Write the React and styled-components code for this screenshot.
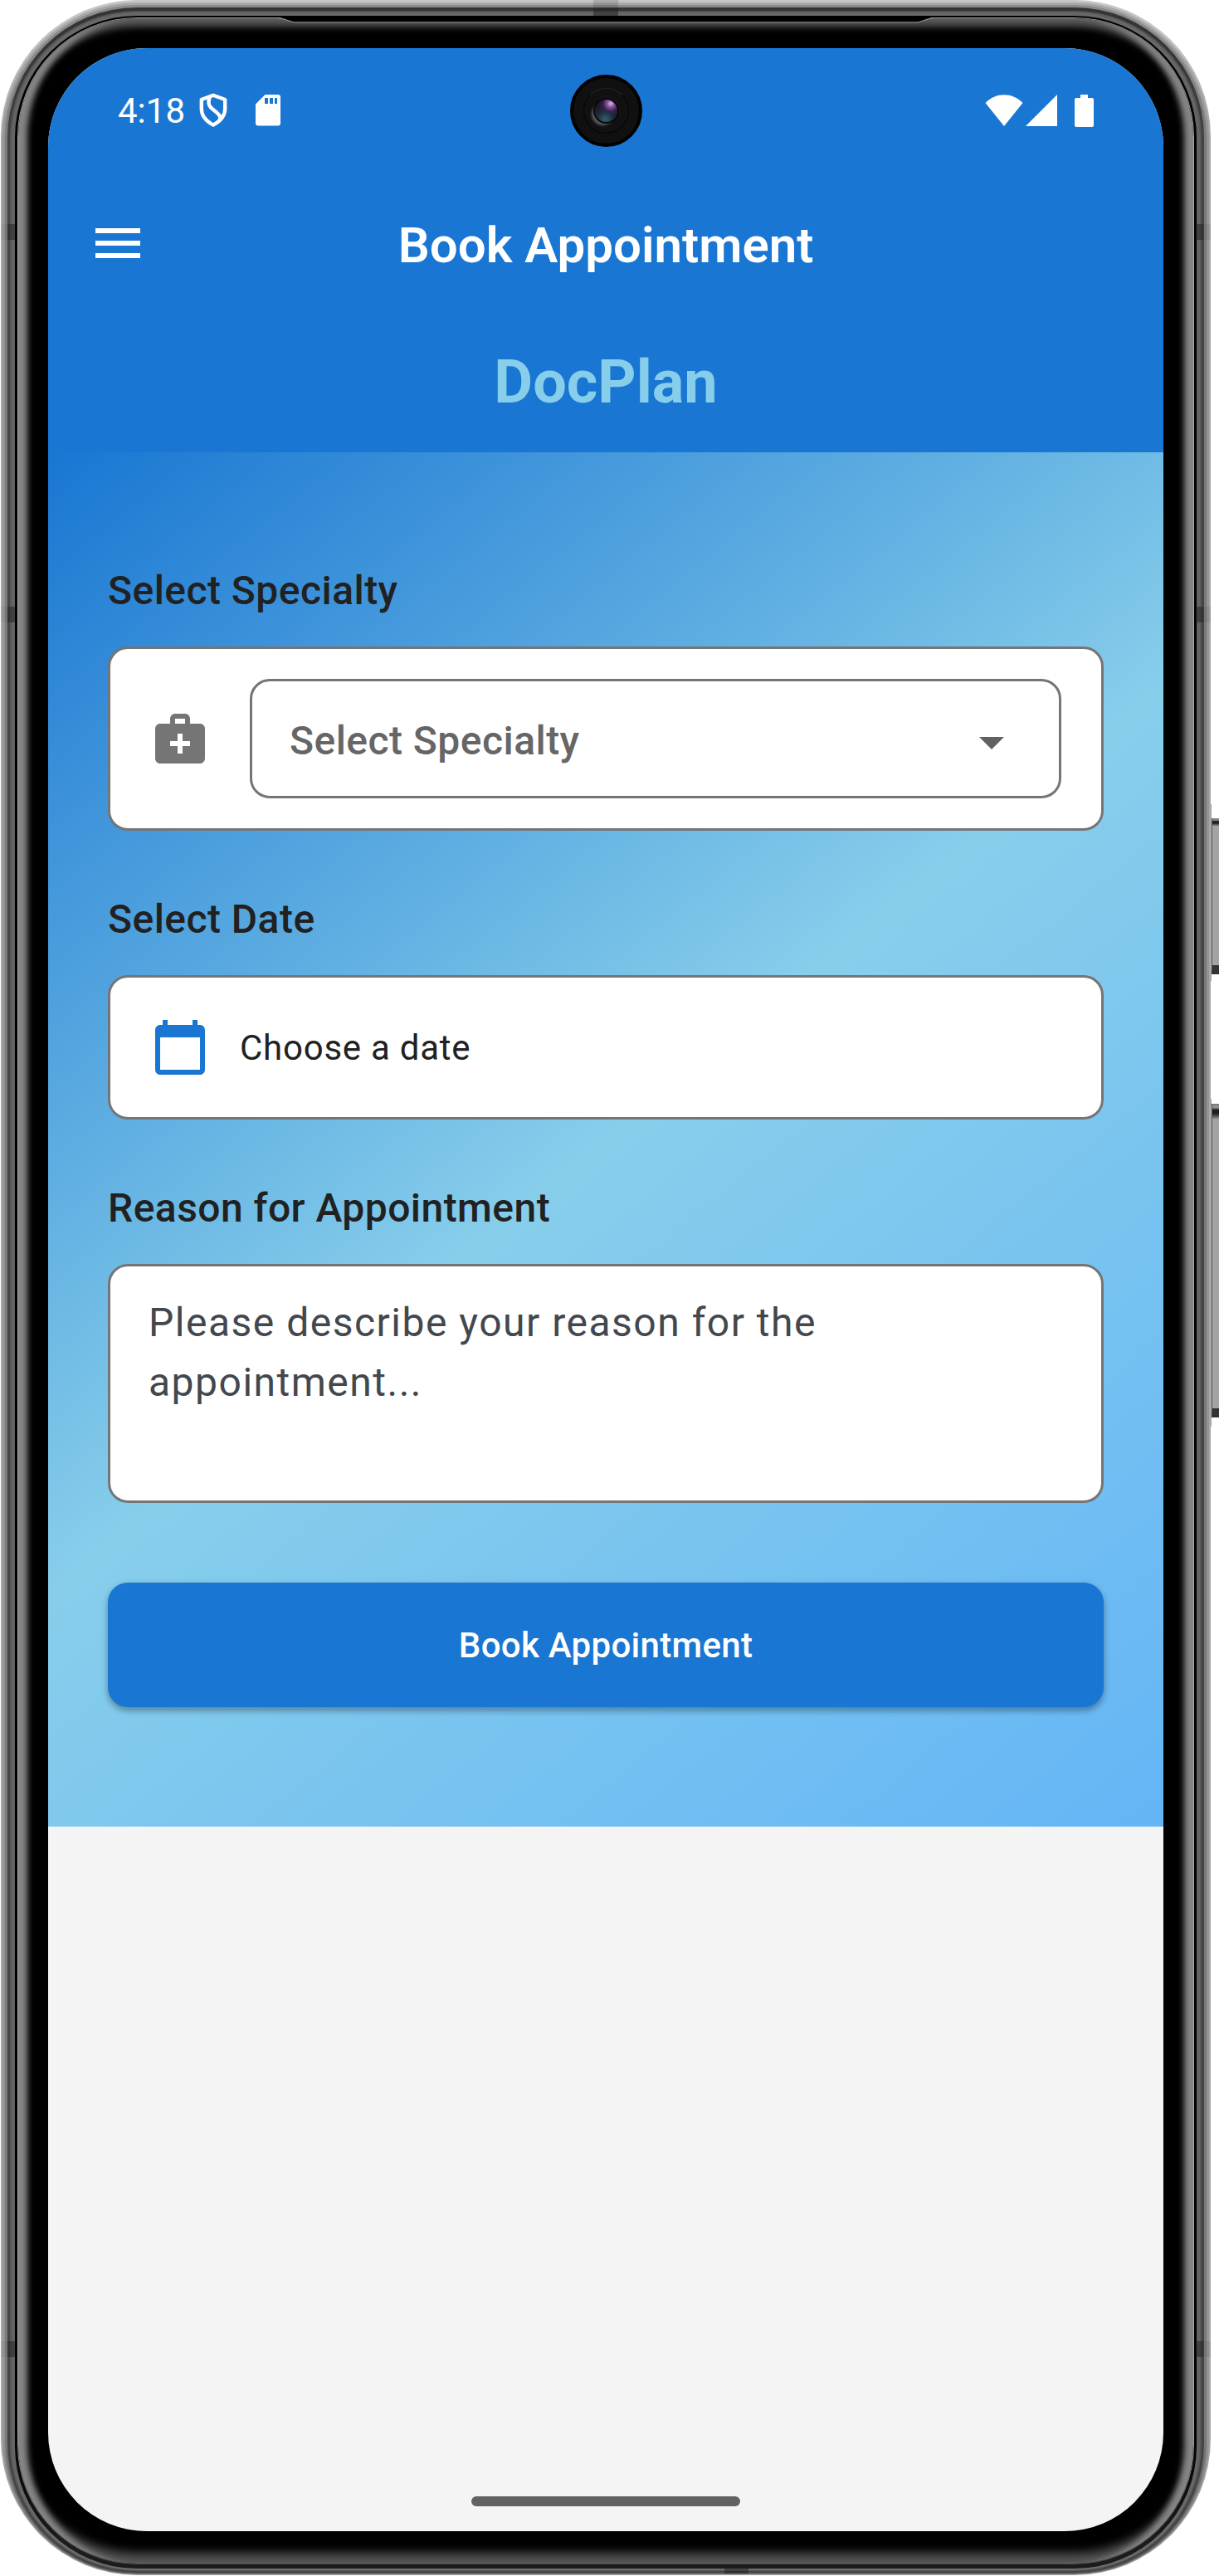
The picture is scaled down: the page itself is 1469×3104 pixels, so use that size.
import React from "react";
import styled, { createGlobalStyle } from "styled-components";

const PRIMARY = "#1976d2";
const SKY = "#87ceeb";

const GlobalStyle = createGlobalStyle`
  html, body { margin: 0; padding: 0; background: #fff; overflow: hidden; }
  *, *::before, *::after { box-sizing: border-box; }
  body { font-family: Roboto, "Liberation Sans", sans-serif; }
  button { font-family: inherit; border: 0; padding: 0; background: none; }
  svg { display: block; flex: none; }
`;

/* ---------- device ---------- */

const Stage = styled.div`
  position: relative;
  width: 1469px;
  height: 3104px;
  padding-left: 1px;
  overflow: hidden;
  background: #fff;
`;

const Ring = styled.div`
  width: ${(p) => p.$width || "100%"};
  height: ${(p) => p.$height || "100%"};
  padding: ${(p) => p.$pad};
  border-radius: ${(p) => p.$radius}px;
  background: linear-gradient(
    180deg,
    ${(p) => p.$tones[0]} 0,
    ${(p) => p.$tones[0]} 30px,
    ${(p) => p.$tones[1]} 170px,
    ${(p) => p.$tones[1]} calc(100% - 170px),
    ${(p) => p.$tones[2]} calc(100% - 30px),
    ${(p) => p.$tones[2]} 100%
  );
`;

const Glass = styled.div`
  width: 100%;
  height: 100%;
  padding: 36px 36px 39px;
  border-radius: 143px;
  background: #000;
  box-shadow:
    inset 15px 0 7px -4px #858585,
    inset -15px 0 7px -4px #858585,
    inset 0 15px 9px -5px #575757,
    inset 0 -18px 12px -5px #525252;
`;

const Screen = styled.main`
  width: 100%;
  height: 100%;
  display: flex;
  flex-direction: column;
  overflow: hidden;
  border-radius: 119px;
  background: #f4f4f4;
`;

const Earpiece = styled.svg`
  position: absolute;
  left: 330px;
  top: 19px;
`;

const Antenna = styled.span`
  position: absolute;
  left: ${(p) => p.$x}px;
  top: ${(p) => p.$y}px;
  width: ${(p) => p.$w}px;
  height: ${(p) => p.$h}px;
  background: rgba(30, 30, 30, ${(p) => p.$alpha});
`;

const SideKey = styled.span`
  position: absolute;
  left: 1460px;
  top: ${(p) => p.$y}px;
  width: 9px;
  height: ${(p) => p.$h}px;
  border-left: 1px solid #555;
  border-bottom: 11px solid #333;
  background: linear-gradient(
    180deg,
    #777 0,
    #999 ${(p) => p.$cap * 0.35}px,
    #1a1a1a ${(p) => p.$cap * 0.65}px,
    #222 ${(p) => p.$cap}px,
    #a4a4a4 ${(p) => p.$cap * 1.6}px,
    #a4a4a4 100%
  );
`;

const KeySeat = styled.span`
  position: absolute;
  left: 1459px;
  top: ${(p) => p.$y}px;
  width: 1px;
  height: ${(p) => p.$h}px;
  background: #a8a8a8;
`;

const Camera = styled.span`
  position: absolute;
  left: 686.5px;
  top: 89.5px;
  width: 87px;
  height: 87px;
  display: flex;
  align-items: center;
  justify-content: center;
  border: 4px solid #000;
  border-radius: 50%;
  background: #101010;
`;

const CameraWell = styled.span`
  width: 55px;
  height: 55px;
  display: flex;
  align-items: center;
  justify-content: center;
  border: 1px solid #050505;
  border-top-color: #242424;
  border-radius: 50%;
  background: #111;
`;

const CameraLens = styled.span`
  width: 27px;
  height: 27px;
  border-radius: 50%;
  background:
    radial-gradient(circle at 70% 18%, #e6b4f0 0, #8f57a6 14%, rgba(70, 36, 92, 0.55) 32%, transparent 50%),
    radial-gradient(circle at 45% 88%, #2f6270 0, #1b2c3a 35%, #1c1026 75%);
  box-shadow: 0 0 0 2px #090909, -4px 4px 3px #5c5c5c, 2px -2px 4px #1c1c1c;
`;

/* ---------- header ---------- */

const Header = styled.header`
  flex: none;
  height: 487px;
  background: ${PRIMARY};
  color: #fff;
`;

const StatusBar = styled.div`
  height: 150px;
  padding: 0 84px;
  display: flex;
  align-items: center;
  justify-content: space-between;
`;

const StatusGroup = styled.div`
  display: flex;
  align-items: center;
`;

const Clock = styled.time`
  width: 98px;
  padding-top: 1px;
  font-size: 42px;
  line-height: 48px;
`;

const IconGap = styled.span`
  width: ${(p) => p.$w}px;
`;

const AppBar = styled.div`
  height: 170px;
  padding: 0 48px;
  display: grid;
  grid-template-columns: 1fr auto 1fr;
  align-items: center;
`;

const MenuButton = styled.button`
  width: 72px;
  height: 72px;
  color: #fff;
`;

const Title = styled.h1`
  margin: 0;
  padding-top: 5px;
  font-size: 60px;
  font-weight: 600;
  line-height: 70px;
`;

const Brand = styled.div`
  height: 165px;
  line-height: 165px;
  text-align: center;
  font-size: 72px;
  font-weight: 700;
  color: ${SKY};
`;

/* ---------- form ---------- */

const Form = styled.section`
  flex: none;
  height: 1656px;
  padding: 131px 72px 0;
  background: linear-gradient(140.94deg, ${PRIMARY} 0%, ${SKY} 50%, #64b5f6 100%);
`;

const Group = styled.div`
  margin-bottom: ${(p) => p.$after}px;
`;

const Label = styled.label`
  display: block;
  margin-bottom: 31px;
  font-size: 48px;
  font-weight: 500;
  line-height: 72px;
  letter-spacing: 0.45px;
  color: #212121;
`;

const Field = styled.div`
  height: ${(p) => p.$h}px;
  padding: 0 48px;
  display: flex;
  align-items: center;
  gap: ${(p) => p.$gap}px;
  border: 3px solid #757575;
  border-radius: 24px;
  background: #fff;
`;

const Select = styled.div`
  flex: 1;
  height: 144px;
  padding: 4px 45px 0;
  display: flex;
  align-items: center;
  justify-content: space-between;
  border: 3px solid #757575;
  border-radius: 24px;
  font-size: 48px;
  font-weight: 500;
  letter-spacing: 0.45px;
  color: #666;

  svg {
    margin-top: 3px;
  }
`;

const DateText = styled.span`
  padding-top: 2px;
  font-size: 42px;
  line-height: 60px;
  letter-spacing: 0.75px;
  color: #212121;
`;

const Reason = styled.div`
  height: 288px;
  padding: 32px 46px;
  border: 3px solid #757575;
  border-radius: 24px;
  background: #fff;
  font-size: 48px;
  line-height: 72px;
  letter-spacing: 1.5px;
  color: #43474e;
`;

const Submit = styled.button`
  width: 100%;
  height: 150px;
  border-radius: 24px;
  background: ${PRIMARY};
  box-shadow: 0 5px 7px rgba(0, 0, 0, 0.24), 0 2px 10px rgba(0, 0, 0, 0.13);
  color: #fff;
  font-size: 42px;
  font-weight: 500;
  letter-spacing: 0.3px;
`;

const NavArea = styled.footer`
  flex: 1;
  display: flex;
  align-items: flex-end;
  justify-content: center;
  padding-bottom: 30px;
`;

const HomeBar = styled.span`
  width: 324px;
  height: 12px;
  border-radius: 6px;
  background: #626262;
`;

/* ---------- icons ---------- */

const Material = ({ d, color = "currentColor", size = 72 }) => (
  <svg width={size} height={size} viewBox="0 0 24 24" fill={color}>
    <path d={d} />
  </svg>
);

const PATHS = {
  menu: "M3 18h18v-2H3v2zm0-5h18v-2H3v2zm0-7v2h18V6H3z",
  medical:
    "M20 6h-4V4c0-1.1-.9-2-2-2h-4c-1.1 0-2 .9-2 2v2H4c-1.1 0-2 .9-2 2v12c0 1.1.9 2 2 2h16c1.1 0 2-.9 2-2V8c0-1.1-.9-2-2-2zM10 4h4v2h-4V4zm6 11h-3v3h-2v-3H8v-2h3v-3h2v3h3v2z",
  calendar:
    "M20 3h-1V1h-2v2H7V1H5v2H4c-1.1 0-2 .9-2 2v16c0 1.1.9 2 2 2h16c1.1 0 2-.9 2-2V5c0-1.1-.9-2-2-2zm0 18H4V8h16v13z",
  drop: "M7 10l5 5 5-5z",
};

const ShieldIcon = () => (
  <svg width="34" height="42" viewBox="0 0 34 42" fill="none" stroke="#fff" strokeWidth="4.4" strokeLinejoin="round">
    <path d="M17 2.800 31.200 8V19C31.200 27 25.500 34 17 38.600 8.500 34 2.800 27 2.800 19V8Z" />
    <path d="M13 4.500C9.500 13 12.500 17 18 21 24.500 26 27 29 24 34" />
  </svg>
);

const SdIcon = () => (
  <svg width="30" height="38" viewBox="0 0 30 38">
    <path
      fill="#fff"
      fillRule="evenodd"
      d="M11.500 0H27a3 3 0 0 1 3 3v31.500a3 3 0 0 1-3 3H3a3 3 0 0 1-3-3V11.500ZM11 4v7h4V4Zm6 0v7h4V4Zm6 0v7h3V4Z"
    />
  </svg>
);

const WifiIcon = () => (
  <svg width="46" height="38" viewBox="0 0 46 38">
    <path fill="#fff" d="M0.500 10C13-3 33-3 45.500 10L23 38Z" />
  </svg>
);

const SignalIcon = () => (
  <svg width="38" height="38" viewBox="0 0 38 38">
    <path fill="#fff" d="M38 0V38H0Z" />
  </svg>
);

const BatteryIcon = () => (
  <svg width="23" height="39" viewBox="0 0 23 39">
    <path fill="#fff" d="M7 0h9v4h5a2 2 0 0 1 2 2v31a2 2 0 0 1-2 2H2a2 2 0 0 1-2-2V6a2 2 0 0 1 2-2h5Z" />
  </svg>
);

/* Metal band, outermost layer first: [top, side, bottom] widths and tones. */
const BAND = [
  { w: [3, 2, 1], tones: ["#c6c6c6", "#a8a8a8", "#a0a0a0"] },
  { w: [3, 3, 1], tones: ["#a8a8a8", "#949494", "#777"] },
  { w: [3, 3, 1], tones: ["#8a8a8a", "#7a7a7a", "#555"] },
  { w: [4, 3, 2], tones: ["#343434", "#444", "#444"] },
  { w: [2, 2, 1], tones: ["#575757", "#585858", "#5a5a5a"] },
  { w: [4, 4, 2], tones: ["#686868", "#636363", "#6c6c6c"] },
  { w: [2, 3, 5], tones: ["#000", "#000", "#1c1c1c"] },
  { w: [1, 1, 1], tones: ["#909090", "#aaa", "#4a4a4a"] },
];

function MetalBand({ layer = 0, radius = 164, children }) {
  if (layer === BAND.length) return children;
  const { w, tones } = BAND[layer];
  return (
    <Ring
      $pad={`${w[0]}px ${w[1]}px ${w[2]}px`}
      $radius={radius}
      $tones={tones}
      $width={layer === 0 ? "1458px" : undefined}
      $height={layer === 0 ? "3103px" : undefined}
    >
      <MetalBand layer={layer + 1} radius={radius - w[1]}>
        {children}
      </MetalBand>
    </Ring>
  );
}

export default function App() {
  return (
    <>
      <GlobalStyle />
      <Stage>
        <MetalBand>
          <Glass>
            <Screen>
              <Header>
                <StatusBar>
                  <StatusGroup>
                    <Clock>4:18</Clock>
                    <ShieldIcon />
                    <IconGap $w={34} />
                    <SdIcon />
                  </StatusGroup>
                  <StatusGroup>
                    <WifiIcon />
                    <IconGap $w={3} />
                    <SignalIcon />
                    <IconGap $w={21} />
                    <BatteryIcon />
                  </StatusGroup>
                </StatusBar>
                <AppBar>
                  <MenuButton aria-label="Menu">
                    <Material d={PATHS.menu} />
                  </MenuButton>
                  <Title>Book Appointment</Title>
                </AppBar>
                <Brand>DocPlan</Brand>
              </Header>

              <Form>
                <Group $after={71}>
                  <Label>Select Specialty</Label>
                  <Field $h={222} $gap={48}>
                    <Material d={PATHS.medical} color="#757575" />
                    <Select>
                      Select Specialty
                      <Material d={PATHS.drop} color="#616161" />
                    </Select>
                  </Field>
                </Group>
                <Group $after={71}>
                  <Label>Select Date</Label>
                  <Field $h={174} $gap={36}>
                    <Material d={PATHS.calendar} color={PRIMARY} />
                    <DateText>Choose a date</DateText>
                  </Field>
                </Group>
                <Group $after={96}>
                  <Label>Reason for Appointment</Label>
                  <Reason>
                    Please describe your reason for the
                    <br />
                    appointment...
                  </Reason>
                </Group>
                <Submit>Book Appointment</Submit>
              </Form>

              <NavArea>
                <HomeBar />
              </NavArea>
            </Screen>
          </Glass>
        </MetalBand>

        <Earpiece width="800" height="10" viewBox="0 0 800 10">
          <path d="M6 1.500H794L778 7.500H24Z" fill="#000" />
          <path d="M6 3 12 4 24 8H776L788 4 794 3" fill="none" stroke="#909090" strokeWidth="1.200" />
        </Earpiece>

        {[270, 731, 2821].map((y) => (
          <React.Fragment key={y}>
            <Antenna $x={9} $y={y} $w={9} $h={19} $alpha={0.5} />
            <Antenna $x={1} $y={y} $w={8} $h={19} $alpha={0.06} />
            <Antenna $x={1441} $y={y} $w={9} $h={19} $alpha={0.5} />
            <Antenna $x={1450} $y={y} $w={9} $h={19} $alpha={0.08} />
          </React.Fragment>
        ))}
        <Antenna $x={715} $y={0} $w={30} $h={10} $alpha={0.16} />
        <Antenna $x={715} $y={10} $w={30} $h={9} $alpha={0.5} />
        <Antenna $x={873} $y={3094} $w={29} $h={7} $alpha={0.5} />

        <KeySeat $y={969} $h={213} />
        <KeySeat $y={1324} $h={395} />
        <SideKey $y={986} $h={188} $cap={6} />
        <SideKey $y={1330} $h={378} $cap={12} />
        <Camera>
          <CameraWell>
            <CameraLens />
          </CameraWell>
        </Camera>
      </Stage>
    </>
  );
}
